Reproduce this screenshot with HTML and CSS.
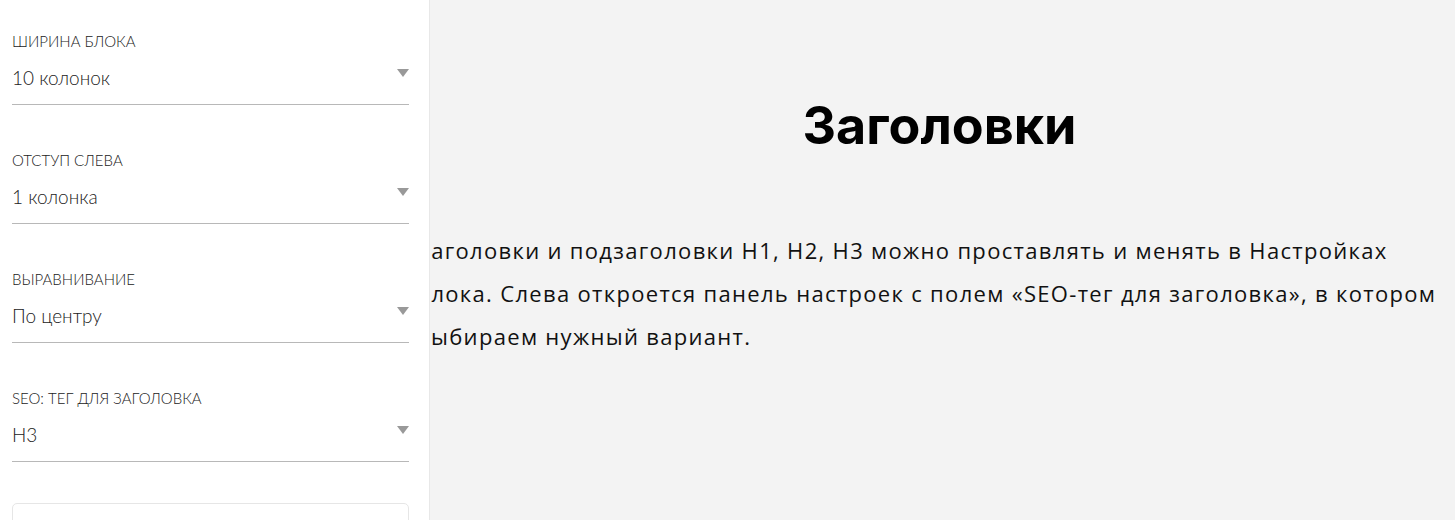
FILE: index.html
```html
<!DOCTYPE html>
<html lang="ru">
<head>
<meta charset="utf-8">
<title>Заголовки</title>
<link rel="stylesheet" href="styles.css">
</head>
<body>
<main class="page">
  <section class="content">
    <h2 class="title">Заголовки</h2>
    <p class="text">Заголовки и подзаголовки Н1, Н2, Н3 можно проставлять и менять в Настройках<br>блока. Слева откроется панель настроек с полем «SEO-тег для заголовка», в котором<br>выбираем нужный вариант.</p>
  </section>
</main>
<aside class="panel">
  <div class="field">
    <div class="field-label">ШИРИНА БЛОКА</div>
    <div class="field-value"><span>10 колонок</span><span class="arrow"></span></div>
  </div>
  <div class="field">
    <div class="field-label">ОТСТУП СЛЕВА</div>
    <div class="field-value"><span>1 колонка</span><span class="arrow"></span></div>
  </div>
  <div class="field">
    <div class="field-label">ВЫРАВНИВАНИЕ</div>
    <div class="field-value"><span>По центру</span><span class="arrow"></span></div>
  </div>
  <div class="field">
    <div class="field-label">SEO: ТЕГ ДЛЯ ЗАГОЛОВКА</div>
    <div class="field-value"><span>H3</span><span class="arrow"></span></div>
  </div>
  <div class="box"></div>
</aside>
</body>
</html>
```
FILE: styles.css
```css
html, body {
  margin: 0;
  padding: 0;
  height: 100%;
}
body {
  background: #f3f3f3;
  overflow: hidden;
  position: relative;
  font-family: "Liberation Sans", sans-serif;
}
.page {
  padding-top: 96px;
}
.content {
  margin-left: 417px;
  width: 1045px;
}
.title {
  margin: 0;
  text-align: center;
  font-family: "Inter", "Noto Sans", sans-serif;
  font-weight: 700;
  font-size: 52px;
  line-height: 60px;
  color: #000;
}
.text {
  margin: 73px 0 0 0;
  font-family: "Open Sans", "Noto Sans", sans-serif;
  font-size: 22px;
  letter-spacing: 1.32px;
  line-height: 43px;
  color: #111;
  white-space: nowrap;
}
.panel {
  position: absolute;
  top: 0;
  left: 0;
  bottom: 0;
  width: 397px;
  padding: 31px 20px 0 12px;
  background: #fff;
  border-right: 1px solid #e8e8e8;
  font-family: "Lato", "Liberation Sans", sans-serif;
  color: #222;
}
.field {
  padding-bottom: 14px;
  border-bottom: 1px solid #b8b8b8;
  margin-bottom: 45px;
}
.field-label {
  font-size: 15px;
  line-height: 20px;
  font-weight: 300;
  color: #222;
}
.field-value {
  margin-top: 15px;
  display: flex;
  justify-content: space-between;
  align-items: center;
  font-size: 19px;
  line-height: 24px;
  font-weight: 300;
  color: #222;
}
.arrow {
  width: 0;
  height: 0;
  border-left: 6.5px solid transparent;
  border-right: 6.5px solid transparent;
  border-top: 8px solid #999;
  margin-top: -10px;
}
.box {
  height: 60px;
  border: 1px solid #e6e6e6;
  border-radius: 5px;
  margin-top: -4px;
}
```
